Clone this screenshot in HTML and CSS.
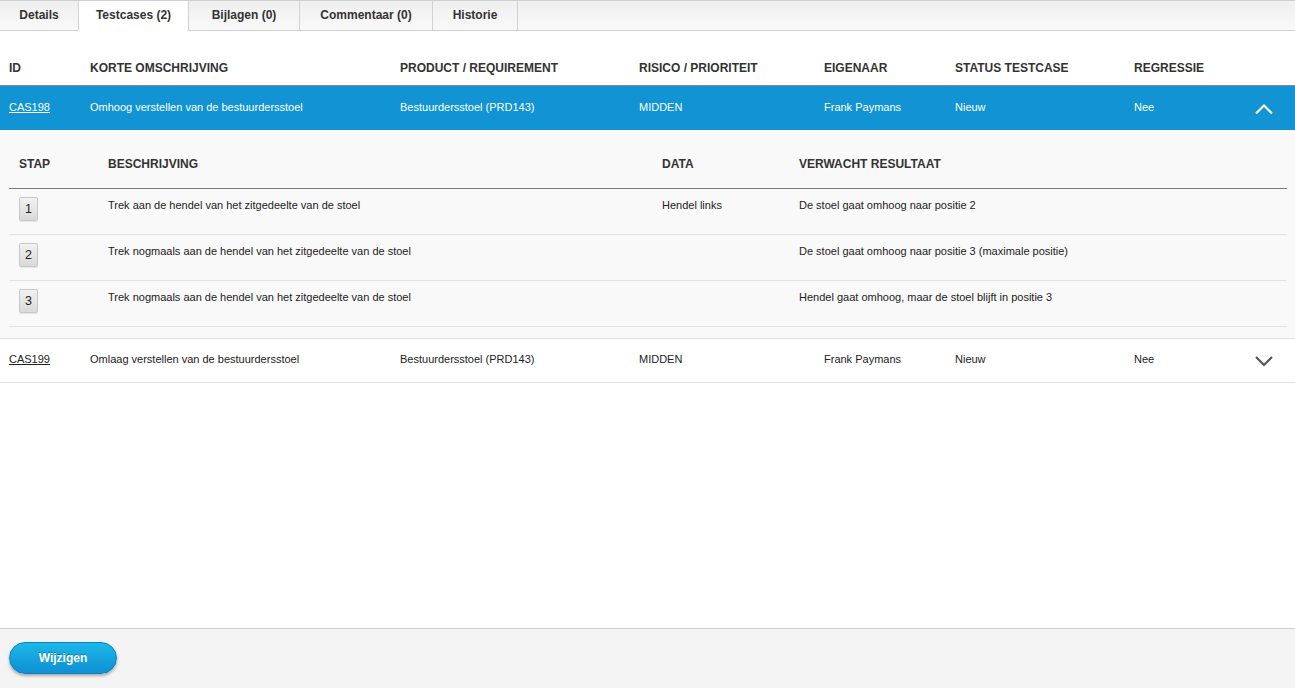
FILE: index.html
```html
<!DOCTYPE html>
<html lang="nl">
<head>
<meta charset="utf-8">
<title>Testcases</title>
<link rel="stylesheet" href="styles.css">
</head>
<body>
<div class="page">
  <nav class="tabs">
    <div class="tab t-details">Details</div>
    <div class="tab t-testcases active">Testcases (2)</div>
    <div class="tab t-bijlagen">Bijlagen (0)</div>
    <div class="tab t-commentaar">Commentaar (0)</div>
    <div class="tab t-historie">Historie</div>
    <div class="tab-rest"></div>
  </nav>

  <main class="content">
    <div class="row head">
      <div class="c c-id">ID</div>
      <div class="c c-oms">KORTE OMSCHRIJVING</div>
      <div class="c c-prod">PRODUCT / REQUIREMENT</div>
      <div class="c c-ris">RISICO / PRIORITEIT</div>
      <div class="c c-eig">EIGENAAR</div>
      <div class="c c-stat">STATUS TESTCASE</div>
      <div class="c c-reg">REGRESSIE</div>
      <div class="c c-tog"></div>
    </div>

    <div class="row item selected">
      <div class="c c-id"><a href="#">CAS198</a></div>
      <div class="c c-oms">Omhoog verstellen van de bestuurdersstoel</div>
      <div class="c c-prod">Bestuurdersstoel (PRD143)</div>
      <div class="c c-ris">MIDDEN</div>
      <div class="c c-eig">Frank Paymans</div>
      <div class="c c-stat">Nieuw</div>
      <div class="c c-reg">Nee</div>
      <div class="c c-tog">
        <svg width="20" height="12" viewBox="0 0 20 12"><path d="M2 10.5 L10 2.5 L18 10.5" fill="none" stroke="#fff" stroke-width="2.2"/></svg>
      </div>
    </div>

    <div class="detail">
      <div class="steps">
        <div class="srow shead">
          <div class="s s-nr">STAP</div>
          <div class="s s-desc">BESCHRIJVING</div>
          <div class="s s-data">DATA</div>
          <div class="s s-res">VERWACHT RESULTAAT</div>
        </div>
        <div class="srow">
          <div class="s s-nr"><span class="badge">1</span></div>
          <div class="s s-desc">Trek aan de hendel van het zitgedeelte van de stoel</div>
          <div class="s s-data">Hendel links</div>
          <div class="s s-res">De stoel gaat omhoog naar positie 2</div>
        </div>
        <div class="srow">
          <div class="s s-nr"><span class="badge">2</span></div>
          <div class="s s-desc">Trek nogmaals aan de hendel van het zitgedeelte van de stoel</div>
          <div class="s s-data"></div>
          <div class="s s-res">De stoel gaat omhoog naar positie 3 (maximale positie)</div>
        </div>
        <div class="srow">
          <div class="s s-nr"><span class="badge">3</span></div>
          <div class="s s-desc">Trek nogmaals aan de hendel van het zitgedeelte van de stoel</div>
          <div class="s s-data"></div>
          <div class="s s-res">Hendel gaat omhoog, maar de stoel blijft in positie 3</div>
        </div>
      </div>
    </div>

    <div class="row item">
      <div class="c c-id"><a href="#">CAS199</a></div>
      <div class="c c-oms">Omlaag verstellen van de bestuurdersstoel</div>
      <div class="c c-prod">Bestuurdersstoel (PRD143)</div>
      <div class="c c-ris">MIDDEN</div>
      <div class="c c-eig">Frank Paymans</div>
      <div class="c c-stat">Nieuw</div>
      <div class="c c-reg">Nee</div>
      <div class="c c-tog">
        <svg width="20" height="12" viewBox="0 0 20 12"><path d="M2 2 L10 10 L18 2" fill="none" stroke="#555" stroke-width="2.2"/></svg>
      </div>
    </div>
  </main>

  <footer class="footer">
    <button class="btn">Wijzigen</button>
  </footer>
</div>
</body>
</html>
```

FILE: styles.css
```css
* { box-sizing: border-box; }
html, body { margin: 0; padding: 0; }
body {
  font-family: "Liberation Sans", Arial, Helvetica, sans-serif;
  color: #222;
  background: #fff;
}
.page {
  width: 1295px;
  height: 688px;
  display: flex;
  flex-direction: column;
}

/* Tabs */
.tabs {
  display: flex;
  height: 31px;
  border-top: 1px solid #cfcfcf;
  background: linear-gradient(#efefef, #f9f9f9);
  flex: none;
}
.tab {
  display: flex;
  align-items: center;
  justify-content: center;
  font-size: 12px;
  font-weight: bold;
  color: #333;
  border-right: 1px solid #d2d2d2;
  border-bottom: 1px solid #cfcfcf;
  padding-bottom: 1px;
}
.t-details { width: 79px; }
.t-testcases { width: 110px; }
.t-bijlagen { width: 111px; }
.t-commentaar { width: 133px; }
.t-historie { width: 85px; }
.tab.active {
  background: #fff;
  border-bottom-color: #fff;
  border-left: 1px solid #d2d2d2;
  margin-left: -1px;
  width: 111px;
}
.tab-rest {
  flex: 1;
  border-bottom: 1px solid #cfcfcf;
}

/* Main table */
.content {
  flex: 1;
  padding-top: 24px;
}
.row {
  display: flex;
  align-items: center;
}
.c {
  font-size: 11px;
  white-space: nowrap;
}
.c-id { width: 90px; padding-left: 9px; }
.c-oms { width: 310px; }
.c-prod { width: 239px; }
.c-ris { width: 185px; }
.c-eig { width: 131px; }
.c-stat { width: 179px; }
.c-reg { width: 100px; }
.c-tog { flex: 1; display: flex; justify-content: flex-end; padding-right: 21px; }

.head {
  height: 31px;
  border-bottom: 1px solid #8a8a8a;
  padding-bottom: 4px;
}
.head .c {
  font-size: 12px;
  font-weight: bold;
  color: #333;
}
.item {
  height: 44px;
  border-bottom: 1px solid #e0e0e0;
}
.item .c { padding-bottom: 3px; }
.item .c-tog { padding-bottom: 0; }
.item a { color: #222; text-decoration: underline; }
.item.selected {
  background: #1193d4;
  border-bottom: none;
  height: 44px;
}
.item.selected .c { color: #fff; }
.item.selected a { color: #fff; }
.item .c-tog svg { margin-top: 1px; }

/* Detail */
.detail {
  background: #f9f9f9;
  padding: 20px 8px 11px 9px;
  border-bottom: 1px solid #e0e0e0;
}
.srow {
  display: flex;
  height: 46px;
  border-bottom: 1px solid #e2e2e2;
  align-items: flex-start;
}
.srow.shead {
  height: 39px;
  border-bottom: 1px solid #7a7a7a;
  align-items: center;
  padding-bottom: 10px;
}
.s {
  font-size: 11px;
  color: #222;
  white-space: nowrap;
}
.shead .s {
  font-size: 12px;
  font-weight: bold;
  color: #333;
  padding-top: 0;
}
.srow:not(.shead) .s { padding-top: 10px; }
.s-nr { width: 99px; padding-left: 10px; }
.s-desc { width: 554px; }
.s-data { width: 137px; }
.s-res { flex: 1; }
.srow:not(.shead) .s-nr { padding-top: 8px; }
.badge {
  display: inline-flex;
  align-items: center;
  justify-content: center;
  width: 19px;
  height: 24px;
  border: 1px solid #c8c8c8;
  border-radius: 2px;
  background: linear-gradient(#f2f2f2, #d9d9d9);
  font-size: 12.5px;
  color: #222;
  box-shadow: 0 1px 1px rgba(0,0,0,0.08);
}

/* Footer */
.footer {
  flex: none;
  height: 60px;
  border-top: 1px solid #cccccc;
  background: #f4f4f4;
  padding: 13px 0 0 9px;
}
.btn {
  width: 108px;
  height: 32px;
  border-radius: 16px;
  border: 1px solid #0d7fc0;
  background: linear-gradient(#1cb8ea, #0f8fd2);
  color: #fff;
  font-family: "Liberation Sans", Arial, sans-serif;
  font-weight: bold;
  font-size: 12px;
  text-shadow: 0 -1px 0 rgba(0,0,0,0.25);
  box-shadow: 0 2px 3px rgba(0,0,0,0.3);
  padding: 0;
}
```
